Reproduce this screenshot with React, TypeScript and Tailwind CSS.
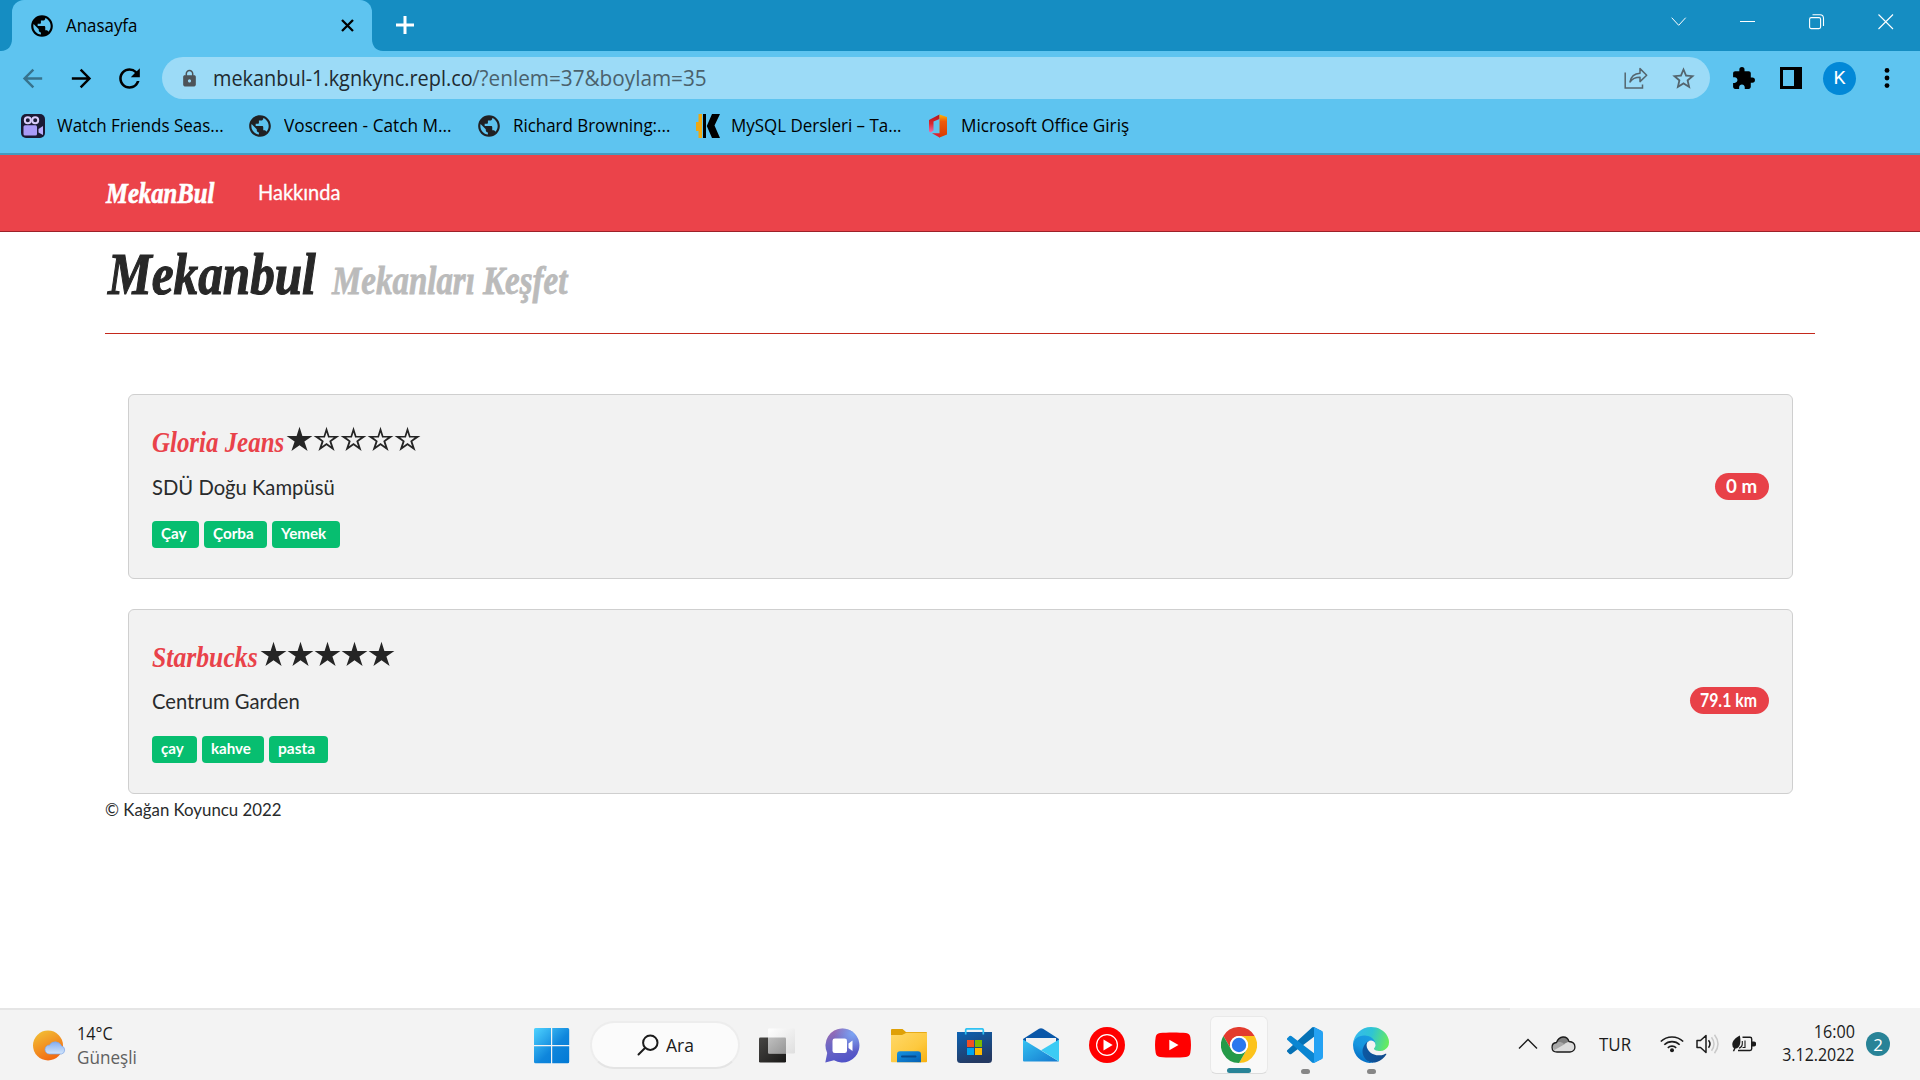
import React from "react";
import { MdPublic, MdLock, MdRefresh, MdExtension, MdStarBorder, MdArrowBack, MdArrowForward } from "react-icons/md";

const UI = "font-['Open_Sans','Noto_Sans',sans-serif]";

function Txt({ className = "", children }: { className?: string; children: React.ReactNode }) {
  return <span className={`inline-block origin-left whitespace-nowrap ${className}`}>{children}</span>;
}

function ShareIcon() {
  return (
    <svg width="24" height="24" viewBox="0 0 24 24" fill="none" stroke="#54656e" strokeWidth="1.5">
      <path d="M1.2 6.5V22H18.5V18.5" />
      <path d="M6 16C7 10.5 10 7.6 16 7.3V2.6L22.7 9.2L16 15.6V11.3C11 11.3 8.2 12.8 6 16Z" strokeLinejoin="round" />
    </svg>
  );
}

function CameraIcon() {
  return (
    <svg width="24" height="24" viewBox="0 0 24 24">
      <rect width="24" height="24" rx="5" fill="#1b1a35" />
      <circle cx="6.8" cy="6.3" r="3" fill="none" stroke="#d9cdfb" strokeWidth="2" />
      <circle cx="14.2" cy="6.3" r="3" fill="none" stroke="#d9cdfb" strokeWidth="2" />
      <rect x="2.5" y="11.3" width="13.5" height="10.2" rx="1.5" fill="#a89bf8" />
      <path d="M17.5 15L22 12V21L17.5 18.5Z" fill="#b9aefa" />
    </svg>
  );
}

function KIcon() {
  return (
    <svg width="24" height="24" viewBox="0 0 24 24">
      <path d="M2.5 0H6V24H2.5V17H0V8H2.5Z" fill="#eda812" />
      <path d="M7 0H10V24H7ZM16 0H24L18.5 11.5L24 24H16L10.8 12Z" fill="#000" />
    </svg>
  );
}

function OfficeIcon() {
  return (
    <svg width="19" height="24" viewBox="0 0 19 24">
      <defs>
        <linearGradient id="of1" x1="0" y1="0" x2="0" y2="1">
          <stop offset="0" stopColor="#b3131b" /><stop offset=".5" stopColor="#d9282e" /><stop offset="1" stopColor="#ef6fb0" />
        </linearGradient>
        <linearGradient id="of2" x1="0" y1="0" x2="0" y2="1">
          <stop offset="0" stopColor="#ffb900" /><stop offset=".3" stopColor="#ee5a0c" /><stop offset="1" stopColor="#d83b01" />
        </linearGradient>
      </defs>
      <path d="M0 6L10.500 0.500V5L4.500 7.500V16.500L1.800 18.500C.6 18.500 0 17.500 0 16.500Z" fill="url(#of1)" />
      <path d="M10.500 .5L18 3V20.500L10.500 23.500V19Z" fill="url(#of2)" />
      <path d="M3 19.300H11V23.700Z" fill="#e0202c" />
    </svg>
  );
}

const bookmarks = [
  { icon: <CameraIcon />, gap: "w-[36px]", text: "Watch Friends Seas...", box: "w-[192px]", fit: "scale-x-[0.943]" },
  { icon: <MdPublic size={26} className="-ml-0.5 text-[#202124]" />, gap: "w-[35px]", text: "Voscreen - Catch M...", box: "w-[194px]", fit: "scale-x-[0.958]" },
  { icon: <MdPublic size={26} className="-ml-0.5 text-[#202124]" />, gap: "w-[35px]", text: "Richard Browning:...", box: "w-[183px]", fit: "scale-x-[0.94]" },
  { icon: <KIcon />, gap: "w-[34.5px]", text: "MySQL Dersleri – Ta...", box: "w-[198px]", fit: "scale-x-[0.941]" },
  { icon: <OfficeIcon />, gap: "w-[32.5px]", text: "Microsoft Office Giriş", box: "w-[180px]", fit: "scale-x-[0.954]" },
];

function Browser() {
  return (
    <header className={`${UI} text-[18px] text-black`}>
      <div className="flex h-[51px] bg-[#158dc2]">
        <svg width="12" height="51" viewBox="0 0 12 51"><path d="M12 39V51H1C8 51 12 46 12 39Z" fill="#5ec4f0" /></svg>
        <div className="flex h-[51px] w-[360px] items-center rounded-t-[12px] bg-[#5ec4f0] pl-[17px]">
          <MdPublic size={26} />
          <Txt className="ml-[11px] w-[270px] scale-x-[0.939]">Anasayfa</Txt>
          <svg className="ml-[5px] shrink-0" width="13" height="13" viewBox="0 0 13 13"><path d="M1 1L12 12M12 1L1 12" stroke="#000" strokeWidth="2.300" /></svg>
        </div>
        <svg width="12" height="51" viewBox="0 0 12 51"><path d="M0 39V51H11C4 51 0 46 0 39Z" fill="#5ec4f0" /></svg>
        <svg className="ml-[12px] mt-[16px]" width="18" height="18" viewBox="0 0 18 18"><path d="M9 0V18M0 9H18" stroke="#fff" strokeWidth="3" /></svg>
        <div className="flex-1" />
        <div className="flex w-[249px] items-start pt-[14px]">
          <svg width="16" height="16" viewBox="0 0 16 16" fill="none" stroke="#fff" strokeWidth="1"><path d="M.7 3.7L7.7 11.300L14.700 3.700" /></svg>
          <svg className="ml-[53px]" width="16" height="16" viewBox="0 0 16 16"><path d="M0 7.5H15" stroke="#fff" /></svg>
          <svg className="ml-[53px]" width="16" height="16" viewBox="0 0 16 16" fill="none" stroke="#fff" strokeWidth="1.1"><rect x=".6" y="3.6" width="11" height="11" rx="1.6" /><path d="M3.5 .7H11C13.4 .7 14.5 2 14.5 4.4V12" /></svg>
          <svg className="ml-[53px]" width="16" height="16" viewBox="0 0 16 16" stroke="#fff" strokeWidth="1.1"><path d="M.5 .5L15 15M15 .5L.5 15" /></svg>
        </div>
      </div>
      <div className="bg-[#5ec4f0]">
        <div className="flex h-[48px] items-center pt-[6px]">
          <MdArrowBack size={29} className="ml-[18px] text-[#37738d]" />
          <MdArrowForward size={29} className="ml-[20px]" />
          <MdRefresh size={31} className="ml-[18px]" />
          <div className="ml-[17px] flex h-[42px] w-[1548px] items-center rounded-full bg-[#9cdbf7] text-[21px]">
            <MdLock size={19} className="ml-[17.5px] text-[#4d5459]" />
            <Txt className="ml-[14.5px] mt-[2px] w-[259px] scale-x-[0.947] text-[#202a30]">mekanbul-1.kgnkync.repl.co</Txt>
            <Txt className="mt-[2px] w-[270px] scale-x-[0.987] text-[#4a616c]">/?enlem=37&amp;boylam=35</Txt>
            <div className="flex-1" />
            <ShareIcon />
            <MdStarBorder size={27} className="ml-[22px] mr-[13px] text-[#54656e]" />
          </div>
          <MdExtension size={25} className="ml-[21px]" />
          <svg className="ml-[24px]" width="22" height="22" viewBox="0 0 22 22"><path fillRule="evenodd" d="M0 0H22V22H0ZM3 3V19H14V3Z" /></svg>
          <div className="ml-[21px] flex size-[33px] items-center justify-center rounded-full bg-[#0288d7] font-[Roboto] text-[19px] text-white">K</div>
          <svg className="ml-[28px]" width="6" height="20" viewBox="0 0 6 20"><circle cx="3" cy="2.4" r="2.4" /><circle cx="3" cy="10" r="2.4" /><circle cx="3" cy="17.6" r="2.4" /></svg>
        </div>
        <div className="flex h-[54px] items-center pl-[21px]">
          {bookmarks.map((b) => (
            <div key={b.text} className="flex items-center">
              <div className={`${b.gap} shrink-0`}>{b.icon}</div>
              <Txt className={`-mt-[2px] ${b.box} ${b.fit}`}>{b.text}</Txt>
            </div>
          ))}
        </div>
        <div className="h-[2px] bg-[#439bc0]" />
      </div>
    </header>
  );
}

function Star({ full }: { full: boolean }) {
  return (
    <svg width="27" height="26" viewBox="0 0 27 26">
      {full
        ? <path d="M13.5 .7L16.4 9.9H26.4L18.4 15.5L21.6 24.9L13.5 19.2L5.4 24.9L8.6 15.5L.6 9.9H10.6Z" fill="#252525" />
        : <path fillRule="evenodd" d="M13.5 .7L16.4 9.9H26.4L18.4 15.5L21.6 24.9L13.5 19.2L5.4 24.9L8.6 15.5L.6 9.9H10.6ZM13.5 6.6L11.9 11.6H6.3L10.7 14.9L9 20.2L13.5 17L18 20.2L16.3 14.9L20.7 11.6H15.1Z" fill="#252525" />}
    </svg>
  );
}

const venues = [
  {
    name: "Gloria Jeans", nameBox: "w-[134px]", nameFit: "scale-x-[0.859]", rating: 1,
    address: "SDÜ Doğu Kampüsü", addrFit: "scale-x-[0.963] leading-[52px]", distance: "0 m", distBox: "w-[54px] pl-[11px]", distFit: "scale-x-[1.04]",
    tags: [
      { t: "Çay", box: "w-[47px]", fit: "scale-x-[0.946]" },
      { t: "Çorba", box: "w-[63px]", fit: "scale-x-[0.95]" },
      { t: "Yemek", box: "w-[68px]", fit: "scale-x-[0.95]" },
    ],
  },
  {
    name: "Starbucks", nameBox: "w-[108px]", nameFit: "scale-x-[0.886]", rating: 5,
    address: "Centrum Garden", addrFit: "scale-x-[0.962] leading-[50px]", distance: "79.1 km", distBox: "mb-[2px] w-[79px] pl-[10px]", distFit: "scale-x-[0.88]",
    tags: [
      { t: "çay", box: "w-[45px]", fit: "scale-x-[0.946]" },
      { t: "kahve", box: "w-[62px]", fit: "scale-x-[0.945]" },
      { t: "pasta", box: "w-[59px]", fit: "scale-x-[0.969]" },
    ],
  },
];

const SCRIPT = "font-['Liberation_Serif',serif] font-bold italic";

function Site() {
  return (
    <main className="flex h-[853px] flex-col bg-white font-[Lato,sans-serif] text-[#292b2c]">
      <nav className="flex h-[77px] items-center border-b border-[#9c2129] bg-[#eb434a] pb-[2px] pl-[106px] text-white">
        <Txt className={`${SCRIPT} w-[152px] scale-x-[0.822] text-[30px] [-webkit-text-stroke:0.7px_white]`}>MekanBul</Txt>
        <Txt className="scale-x-[0.953] text-[21px] [-webkit-text-stroke:0.3px_white]">Hakkında</Txt>
      </nav>
      <div className="mx-[105px] flex h-[102px] items-baseline pl-[3px]">
        <Txt className={`${SCRIPT} w-[224px] scale-x-[0.82] text-[60px] leading-[84px] text-[#282828] [-webkit-text-stroke:1.2px_#282828]`}>Mekanbul</Txt>
        <Txt className={`${SCRIPT} scale-x-[0.824] text-[40px] text-[#bbbbbb] [-webkit-text-stroke:0.8px_#bbbbbb]`}>Mekanları Keşfet</Txt>
      </div>
      <div className="mx-[105px] -mt-px h-px bg-[#c4291c]" />
      <div className="mx-[128px] mt-[60px] mr-[127px] flex flex-col gap-[30px]">
        {venues.map((v) => (
          <section key={v.name} className="flex h-[185px] items-center justify-between rounded-[6px] border border-[#cfcfcf] bg-[#f2f2f2] pl-[23px] pr-[23px]">
            <div className="flex h-[183px] flex-col pt-[28px]">
              <div className="flex h-[38px] items-center">
                <Txt className={`${SCRIPT} ${v.nameBox} ${v.nameFit} text-[29px] leading-[38px] text-[#e9424a]`}>{v.name}</Txt>
                <div className="flex pb-[7px]">{[1, 2, 3, 4, 5].map((n) => <Star key={n} full={n <= v.rating} />)}</div>
              </div>
              <Txt className={`h-[52px] text-[21px] ${v.addrFit}`}>{v.address}</Txt>
              <div className="mt-[8px] flex gap-[5px]">
                {v.tags.map((g) => (
                  <div key={g.t} className={`${g.box} h-[27px] rounded-[4px] bg-[#07be70] pl-[9px] text-[16px] leading-[24px] font-bold text-white`}>
                    <Txt className={g.fit}>{g.t}</Txt>
                  </div>
                ))}
              </div>
            </div>
            <div className={`${v.distBox} h-[27px] rounded-full bg-[#e84148] text-[18px] leading-[26px] font-bold text-white`}>
              <Txt className={v.distFit}>{v.distance}</Txt>
            </div>
          </section>
        ))}
      </div>
      <footer className="ml-[105px] text-[17px] leading-[31px]"><Txt className="scale-x-[0.99]">© Kağan Koyuncu 2022</Txt></footer>
    </main>
  );
}

function WeatherIcon() {
  return (
    <svg width="34" height="32" viewBox="0 0 34 32">
      <defs>
        <linearGradient id="sun" x1=".2" y1="0" x2=".7" y2="1"><stop offset="0" stopColor="#f2bf35" /><stop offset="1" stopColor="#f2650f" /></linearGradient>
        <linearGradient id="cl" x1="0" y1="0" x2="0" y2="1"><stop offset="0" stopColor="#86aef0" /><stop offset="1" stopColor="#d3e6fb" /></linearGradient>
      </defs>
      <circle cx="15" cy="15.5" r="15" fill="url(#sun)" />
      <path d="M16.500 24a4.500 4.500 0 0 1 0-9a6.800 6.800 0 0 1 12 1a4.100 4.100 0 0 1 0 8Z" fill="url(#cl)" stroke="#7fa6e6" strokeWidth=".7" />
    </svg>
  );
}

function WindowsIcon() {
  return (
    <svg width="36" height="36" viewBox="0 0 36 36">
      <defs><linearGradient id="win" gradientUnits="userSpaceOnUse" x1="0" y1="0" x2="36" y2="36"><stop offset="0" stopColor="#4fd3ff" /><stop offset=".55" stopColor="#0f86dc" /><stop offset="1" stopColor="#0078d4" /></linearGradient></defs>
      <path d="M1.5 0H17V17H0V1.5Q0 0 1.5 0ZM18.2 0H33.7Q35.2 0 35.2 1.5V17H18.2ZM0 18.2H17V35.2H1.5Q0 35.2 0 33.7ZM18.2 18.2H35.2V33.7Q35.2 35.2 33.7 35.2H18.2Z" fill="url(#win)" />
    </svg>
  );
}

function TaskViewIcon() {
  return (
    <svg width="36" height="36" viewBox="0 0 36 36">
      <defs>
        <linearGradient id="tv1" x1="0" y1="0" x2="1" y2="1"><stop offset="0" stopColor="#484745" /><stop offset="1" stopColor="#191817" /></linearGradient>
        <linearGradient id="tv2" x1="0" y1="0" x2="1" y2="1"><stop offset="0" stopColor="#fff" /><stop offset="1" stopColor="#dedede" /></linearGradient>
        <linearGradient id="tv3" x1="0" y1="0" x2="1" y2="1"><stop offset="0" stopColor="#c0c0c0" /><stop offset="1" stopColor="#969696" /></linearGradient>
      </defs>
      <rect x="0" y="9.5" width="27" height="25" rx="1.3" fill="url(#tv1)" />
      <rect x="9" y=".5" width="27" height="25" rx="1.3" fill="url(#tv2)" />
      <path d="M9 9.5H26Q27 9.5 27 10.5V25.2H9Z" fill="url(#tv3)" />
    </svg>
  );
}

function ChatIcon() {
  return (
    <svg width="36" height="36" viewBox="0 0 36 36">
      <defs>
        <linearGradient id="chat" x1=".2" y1="0" x2=".6" y2="1"><stop offset="0" stopColor="#a06bb0" /><stop offset=".4" stopColor="#6f68c4" /><stop offset="1" stopColor="#4f52c8" /></linearGradient>
        <radialGradient id="chat2" cx=".8" cy=".15" r=".55"><stop offset="0" stopColor="#7ba4f4" /><stop offset="1" stopColor="#7ba4f4" stopOpacity="0" /></radialGradient>
      </defs>
      <path d="M17.500 .5A17 17 0 1 1 9 32.300L.3 34.500L2.200 25A17 17 0 0 1 17.500 .5Z" fill="url(#chat)" />
      <circle cx="17.500" cy="17.500" r="17" fill="url(#chat2)" />
      <rect x="7.500" y="10.500" width="14.500" height="14.500" rx="2.300" fill="#fff" />
      <path d="M23.500 15.500L27.500 12.400V23L23.500 20Z" fill="#fff" />
    </svg>
  );
}

function FolderIcon() {
  return (
    <svg width="36" height="36" viewBox="0 0 36 36">
      <defs>
        <linearGradient id="fo" x1="0" y1="0" x2="1" y2="1"><stop offset="0" stopColor="#ffd869" /><stop offset=".6" stopColor="#fdc93f" /><stop offset="1" stopColor="#f7b010" /></linearGradient>
        <linearGradient id="fb" x1="0" y1="0" x2="1" y2="1"><stop offset="0" stopColor="#1593e2" /><stop offset="1" stopColor="#0560b4" /></linearGradient>
      </defs>
      <path d="M0 2Q0 1 1 1H11.5L15 4H35Q36 4 36 5V12H0Z" fill="#dfa006" />
      <path d="M0 7H11L15.5 4.7H36V33.5Q36 34.3 35 34.3H1Q0 34.3 0 33.5Z" fill="url(#fo)" />
      <path d="M6 34.3V26.5Q6 23.3 9 23.3H27Q30 23.3 30 26.5V34.3Z" fill="url(#fb)" />
      <rect x="10" y="27.6" width="15.5" height="2" rx="1" fill="#074a8d" />
    </svg>
  );
}

function StoreIcon() {
  return (
    <svg width="36" height="36" viewBox="0 0 36 36">
      <defs><linearGradient id="st" x1="0" y1="0" x2=".4" y2="1"><stop offset="0" stopColor="#0c63b4" /><stop offset="1" stopColor="#243962" /></linearGradient></defs>
      <path d="M0 4H35V31.5Q35 35 31.5 35H3.5Q0 35 0 31.5Z" fill="url(#st)" />
      <path d="M8.7 6.5V2Q8.7 .8 10 .8H25Q26.3 .8 26.3 2V6.5" fill="none" stroke="#2fc2f3" strokeWidth="1.7" />
      <path d="M10 12H17V19H10Z" fill="#f25022" /><path d="M18 12H25V19H18Z" fill="#7fba00" />
      <path d="M10 20H17V27H10Z" fill="#00a4ef" /><path d="M18 20H25V27H18Z" fill="#ffb900" />
    </svg>
  );
}

function MailIcon() {
  return (
    <svg width="36" height="36" viewBox="0 0 36 36">
      <defs><linearGradient id="ma" x1="0" y1="0" x2="1" y2="1"><stop offset="0" stopColor="#35c3f2" /><stop offset="1" stopColor="#1377ce" /></linearGradient></defs>
      <path d="M0 11L16 .8Q18 -.3 20 .8L36 11V20H0Z" fill="#0a57a8" />
      <path d="M3 10H33V14L18 25L3 14Z" fill="#f2f2f2" />
      <path d="M0 11.5L36 33.5H1Q0 33.5 0 32.5Z" fill="url(#ma)" />
      <path d="M36 11.5L18 22.3L36 33.5Z" fill="#3ccbf4" />
    </svg>
  );
}

function MusicIcon() {
  return (
    <svg width="36" height="36" viewBox="0 0 36 36">
      <circle cx="18" cy="18" r="18" fill="#f00" />
      <circle cx="18" cy="18" r="10.4" fill="none" stroke="#fff" strokeWidth="1.2" />
      <path d="M14.5 12.5L23.7 18L14.5 23.5Z" fill="#fff" />
    </svg>
  );
}

function YoutubeIcon() {
  return (
    <svg width="36" height="36" viewBox="0 0 36 36">
      <path d="M5 6C12 5.200 24 5.200 31 6Q34.800 6.500 35.300 10C36.200 15 36.200 21 35.300 26Q34.800 29.500 31 30C24 30.800 12 30.800 5 30Q1.200 29.500.7 26C-.2 21-.2 15 .7 10Q1.200 6.500 5 6Z" fill="#f00" />
      <path d="M14.300 12.700L23.500 18L14.300 23.300Z" fill="#fff" />
    </svg>
  );
}

function ChromeIcon() {
  return (
    <svg width="36" height="36" viewBox="0 0 48 48">
      <path d="M24 12H44.800A24 24 0 0 0 3.200 12L13.600 30A12 12 0 0 1 24 12Z" fill="#e33b2e" />
      <path d="M34.400 30L24 48A24 24 0 0 0 44.800 12H24A12 12 0 0 1 34.400 30Z" fill="#fcc31c" />
      <path d="M13.600 30L3.200 12A24 24 0 0 0 24 48L34.400 30A12 12 0 0 1 13.600 30Z" fill="#249a48" />
      <circle cx="24" cy="24" r="12" fill="#fff" />
      <circle cx="24" cy="24" r="9.600" fill="#2b78ee" />
    </svg>
  );
}

function CodeIcon() {
  return (
    <svg width="36" height="36" viewBox="0 0 100 100">
      <path d="M96.460 10.800 75.860.88a6.230 6.230 0 0 0-7.100 1.200L1.300 63.580a4.170 4.170 0 0 0 0 6.160l5.500 5a4.170 4.170 0 0 0 5.330.24L93.360 13.370c2.720-2.070 6.640-.13 6.640 3.300v-.24a6.250 6.250 0 0 0-3.540-5.630z" fill="#0571b5" />
      <path d="M96.460 89.200 75.860 99.120a6.230 6.230 0 0 1-7.100-1.200L1.300 36.420a4.170 4.170 0 0 1 0-6.160l5.500-5a4.170 4.170 0 0 1 5.330-.24L93.360 86.630c2.720 2.070 6.640.13 6.640-3.300v.24a6.250 6.250 0 0 1-3.540 5.630z" fill="#0a86d2" />
      <path d="M75.860 99.130a6.230 6.230 0 0 1-7.100-1.210c2.300 2.310 6.240.68 6.240-2.580V4.660c0-3.260-3.940-4.900-6.250-2.590a6.230 6.230 0 0 1 7.100-1.200L96.460 10.780A6.250 6.250 0 0 1 100 16.400V83.600a6.250 6.250 0 0 1-3.540 5.630z" fill="#25a2f3" />
    </svg>
  );
}

function EdgeIcon() {
  return (
    <svg width="36" height="36" viewBox="0 0 256 256">
      <defs>
        <linearGradient id="e1" x1="0" y1=".5" x2="1" y2=".5"><stop offset="0" stopColor="#0c59a4" /><stop offset="1" stopColor="#114a8b" /></linearGradient>
        <linearGradient id="e2" x1=".7" y1="0" x2=".3" y2="1"><stop offset="0" stopColor="#1b9de2" /><stop offset=".5" stopColor="#1595df" /><stop offset="1" stopColor="#0067c0" /></linearGradient>
        <linearGradient id="e3" x1="0" y1=".3" x2="1" y2=".5"><stop offset="0" stopColor="#35b8f1" /><stop offset=".5" stopColor="#2fc5d3" /><stop offset="1" stopColor="#66eb5e" /></linearGradient>
      </defs>
      <path d="M231.080 190.540c-3.380 1.770-6.880 3.310-10.460 4.630a101.410 101.410 0 0 1-35.770 6.460c-47.150 0-88.220-32.430-88.220-74.050A31.400 31.400 0 0 1 113 100.220c-42.650 1.790-53.610 46.240-53.610 72.280 0 73.630 67.860 81.090 82.480 81.090 7.880 0 19.770-2.290 26.900-4.540l1.310-.44a128.330 128.330 0 0 0 66.600-52.800 4 4 0 0 0-5.600-5.270Z" fill="url(#e1)" />
      <path d="M105.730 241.420A79.180 79.180 0 0 1 83 220.080 80.720 80.720 0 0 1 112.520 100.270c3.120-1.470 8.450-4.130 15.540-4a32.350 32.350 0 0 1 25.690 13 31.880 31.880 0 0 1 6.360 18.660c0-.21 24.460-79.600-80-79.600-43.900 0-80 41.660-80 78.210a130.150 130.150 0 0 0 12.110 56 128 128 0 0 0 156.380 67.110 75.550 75.550 0 0 1-62.780-8Z" fill="url(#e2)" />
      <path d="M152.330 148.860c-.81 1.050-3.300 2.500-3.300 5.660 0 2.610 1.700 5.120 4.720 7.230 14.380 10 41.490 8.680 41.560 8.680a59.560 59.560 0 0 0 30.270-8.350A61.380 61.380 0 0 0 256 109.090c.26-22.410-8-37.310-11.340-43.910C223.460 23.840 177.720 0 128 0A128 128 0 0 0 0 126.200c.48-36.540 36.800-66.050 80-66.050 3.500 0 23.460.34 42 10.070 16.340 8.580 24.900 18.940 30.850 29.210 6.180 10.670 7.280 24.150 7.280 29.520s-2.740 13.330-7.800 19.910Z" fill="url(#e3)" />
    </svg>
  );
}

function AppSlot({ className = "pt-[11px]", mark = "", children }: { className?: string; mark?: string; children: React.ReactNode }) {
  return (
    <div className={`flex h-[58px] w-[58px] shrink-0 flex-col items-center rounded-[6px] ${className}`}>
      {children}
      {mark && <div className={`mt-auto h-[5px] rounded-full ${mark}`} />}
    </div>
  );
}

function Taskbar() {
  return (
    <footer className={`${UI} flex h-[72px] bg-[#f3f3f3] text-[18px] text-[#1b1b1b]`}>
      <div className="flex w-[1510px] shrink-0 border-t-2 border-[#e5e5e5]">
        <div className="flex w-[534px] items-start pl-[33px] pt-[20px]">
          <WeatherIcon />
          <div className="-mt-[9px] ml-[10px] flex flex-col leading-[24px]">
            <Txt className="scale-x-[0.9]">14°C</Txt>
            <Txt className="scale-x-[0.95] text-[#606060]">Güneşli</Txt>
          </div>
        </div>
        <div className="w-[56px] pt-[18px]"><WindowsIcon /></div>
        <div className="mt-[11px] flex h-[48px] w-[150px] items-center rounded-full border-2 border-b-[#e4e4e4] border-[#ededed] bg-[#fbfbfb] pl-[45px]">
          <svg width="22" height="22" viewBox="0 0 22 22" fill="none" stroke="#1b1b1b" strokeWidth="2"><circle cx="13.300" cy="8.700" r="7.200" /><path d="M8 14L1.500 20.500" strokeLinecap="round" /></svg>
          <Txt className="ml-[7px] scale-x-[0.973]">Ara</Txt>
        </div>
        <div className="ml-[8px] flex gap-[8px] pt-[6px]">
          <AppSlot className="pt-[12px]"><TaskViewIcon /></AppSlot>
          <AppSlot className="pt-[12px]"><ChatIcon /></AppSlot>
          <AppSlot className="pt-[12px]"><FolderIcon /></AppSlot>
          <AppSlot className="pt-[12px]"><StoreIcon /></AppSlot>
          <AppSlot className="pt-[12px]"><MailIcon /></AppSlot>
          <AppSlot><MusicIcon /></AppSlot>
          <AppSlot><YoutubeIcon /></AppSlot>
          <AppSlot className="border border-[#e9e9e9] border-b-[#dcdcdc] bg-[#f9f9f9] pt-[10px]" mark="w-[24px] bg-[#288397]"><ChromeIcon /></AppSlot>
          <AppSlot mark="w-[9px] bg-[#868686]"><CodeIcon /></AppSlot>
          <AppSlot mark="w-[9px] bg-[#868686]"><EdgeIcon /></AppSlot>
        </div>
      </div>
      <div className="flex flex-1 items-center">
        <svg className="ml-[8px]" width="20" height="12" viewBox="0 0 20 12" fill="none" stroke="#1b1b1b" strokeWidth="1.400"><path d="M1 10.500L10 1.500L19 10.500" /></svg>
        <svg className="ml-[13px]" width="25" height="17" viewBox="0 0 25 17">
          <path d="M6 16C-.5 16-.5 7 5.500 6.500C8-.5 16-.8 18 5.500C26 6 25.500 16 19 16Z" fill="#dcdcdc" />
          <path d="M2.500 13C0 9 3 6.500 5.500 6.500C8 4.500 12 6 14 8L3.500 14Z" fill="#a8a8a8" />
          <path d="M5.500 6.500C8-.5 16-.8 18 5.500L13 8C11 6 8 5.500 5.500 6.500Z" fill="#7f7f7f" />
          <path d="M6 16C-.5 16-.5 7 5.500 6.500C8-.5 16-.8 18 5.500C26 6 25.500 16 19 16Z" fill="none" stroke="#1b1b1b" strokeWidth="1.300" />
        </svg>
        <Txt className="ml-[23px] w-[61px] scale-x-[0.94]">TUR</Txt>
        <svg width="24" height="18" viewBox="0 0 24 18" fill="none" stroke="#1b1b1b" strokeWidth="1.600">
          <path d="M.8 6.500A16 16 0 0 1 23.200 6.500M4.300 9.800A11 11 0 0 1 19.700 9.800M7.800 12.800A6.200 6.200 0 0 1 16.200 12.800" />
          <circle cx="12" cy="15.300" r="2" fill="#1b1b1b" stroke="none" />
        </svg>
        <svg className="ml-[12px]" width="24" height="20" viewBox="0 0 24 20" fill="none" strokeWidth="1.500">
          <path d="M1 6.500H4.500L10 1.500V18.500L4.500 13.500H1Z" stroke="#1b1b1b" strokeLinejoin="round" />
          <path d="M12.500 6.300Q15.500 10 12.500 13.700" stroke="#1b1b1b" />
          <path d="M15.500 3.300Q20.500 10 15.500 16.700M18.500 .8Q25.500 10 18.500 19.200" stroke="#c9c9c9" />
        </svg>
        <svg className="ml-[12px]" width="24" height="18" viewBox="0 0 24 18">
          <path d="M10.500 2.300H18Q19.700 2.300 19.700 4V13.800Q19.700 15.500 18 15.500H6" fill="none" stroke="#1b1b1b" strokeWidth="1.400" />
          <path d="M20 6.500H22Q24 6.700 24 8V10Q24 11.300 22 11.500H20Z" fill="#1b1b1b" />
          <path d="M7.800 .5C3 3 .3 6 .3 9.500Q.3 12.300 2 13.300L.8 16.300H2.300L3.500 13.500C8.300 13.300 9.300 6.500 7.800 .5Z" fill="#1b1b1b" />
          <path d="M10.300 6V9C10.300 11.500 9 12.500 7 13.300M13 5.500V12.500H10.500" fill="none" stroke="#1b1b1b" strokeWidth="1.100" />
        </svg>
        <div className="-mt-[2px] ml-[25.500px] flex w-[73px] flex-col items-end leading-[23.500px]">
          <Txt className="origin-right scale-x-[0.897]">16:00</Txt>
          <Txt className="origin-right scale-x-[0.887]">3.12.2022</Txt>
        </div>
        <div className="ml-[11.500px] flex size-[24px] items-center justify-center rounded-full bg-[#288397] text-[17px] leading-none text-white">2</div>
      </div>
    </footer>
  );
}

export default function App() {
  return (
    <div className="h-[1080px] w-[1920px] overflow-hidden bg-white">
      <Browser />
      <Site />
      <Taskbar />
    </div>
  );
}
